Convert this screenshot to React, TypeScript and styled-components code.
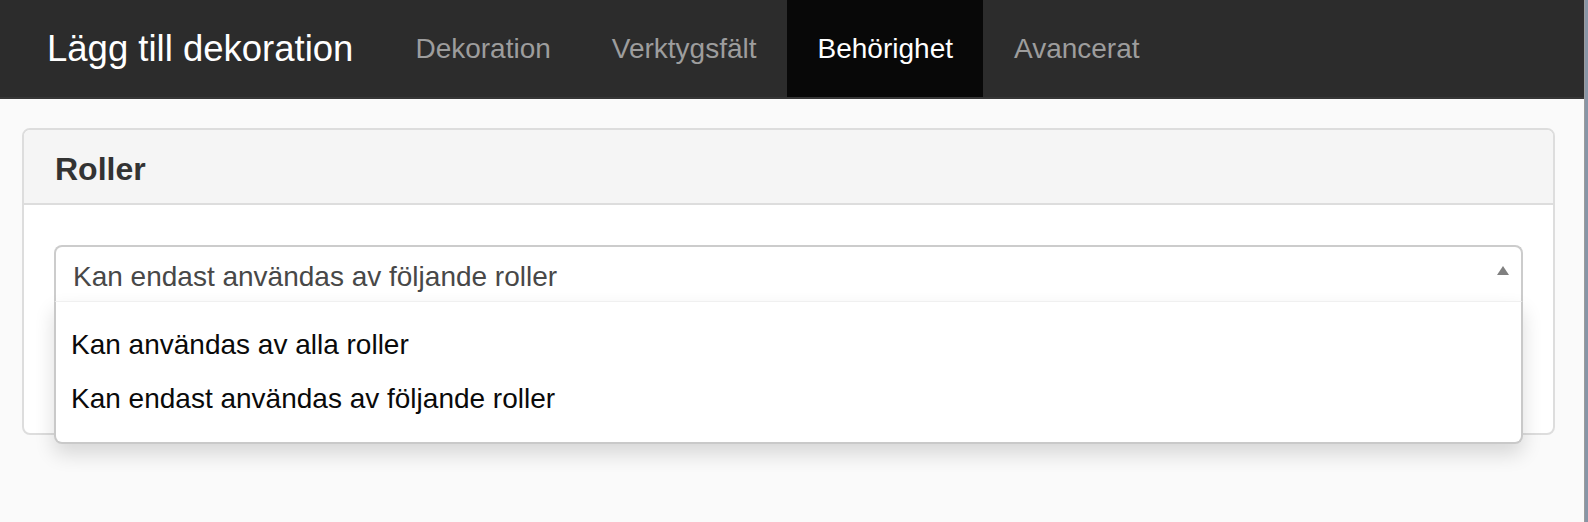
import React from "react";
import styled, { createGlobalStyle } from "styled-components";

const GlobalStyle = createGlobalStyle`
  html, body {
    margin: 0;
    padding: 0;
    background: #fafafa;
  }
  body {
    font-family: "Liberation Sans", Arial, Helvetica, sans-serif;
  }
  * {
    box-sizing: border-box;
  }
`;

const Frame = styled.div`
  display: flex;
  width: 100%;
  min-height: 522px;
`;

const Page = styled.div`
  flex: 1;
  min-width: 0;
  background: #fafafa;
`;

const WindowEdge = styled.div`
  width: 4px;
  border-left: 1px solid #9c9c9c;
  background: #8795a6;
`;
// ===================================
const Navbar = styled.nav`
  display: flex;
  align-items: stretch;
  height: 99px;
  background: #2c2c2c;
  border-bottom: 2px solid #363636;
`;

const Brand = styled.div`
  display: flex;
  align-items: center;
  padding: 0 31.5px 0 47px;
  font-size: 36.5px;
  color: #ffffff;
  white-space: nowrap;
`;

const Tabs = styled.ul`
  display: flex;
  margin: 0;
  padding: 0;
  list-style: none;
`;

const Tab = styled.li<{ $active?: boolean }>`
  display: flex;
  align-items: center;
  padding: 0 30.5px;
  font-size: 28px;
  color: ${(p) => (p.$active ? "#ffffff" : "#9d9d9d")};
  background: ${(p) => (p.$active ? "#080808" : "transparent")};
  white-space: nowrap;
  cursor: pointer;
`;
// ===================================
const Content = styled.main`
  padding: 29px 29px 0 22px;
`;

const Panel = styled.section`
  background: #ffffff;
  border: 2px solid #dddddd;
  border-radius: 8px;
`;

const PanelHeading = styled.header`
  display: flex;
  align-items: center;
  height: 75px;
  padding: 6px 31px 0;
  background: #f5f5f5;
  border-bottom: 2px solid #dddddd;
  border-radius: 6px 6px 0 0;
`;

const PanelTitle = styled.h3`
  margin: 0;
  font-size: 32px;
  font-weight: bold;
  color: #333333;
`;

const PanelBody = styled.div`
  height: 228px;
  padding: 40px 30px 30px;
`;
// ===================================
const Select = styled.div`
  position: relative;
`;

const Control = styled.div`
  position: relative;
  display: flex;
  align-items: center;
  height: 56px;
  padding: 5px 17px 0;
  border: 2px solid #cccccc;
  border-bottom: none;
  border-radius: 8px 8px 0 0;
  font-size: 28px;
  color: #484848;
  background: #ffffff;
`;

const Arrow = styled.span`
  position: absolute;
  top: 19px;
  right: 12px;
  width: 0;
  height: 0;
  border-left: 6px solid transparent;
  border-right: 6px solid transparent;
  border-bottom: 9px solid #808080;
`;

const Dropdown = styled.ul`
  position: absolute;
  top: 100%;
  left: 0;
  right: 0;
  z-index: 2;
  margin: 0;
  padding: 16px 0;
  list-style: none;
  background: #ffffff;
  border: 2px solid #c9c9c9;
  border-top: 1px solid #f0f0f0;
  border-radius: 0 0 8px 8px;
  box-shadow: 0 10px 20px rgba(0, 0, 0, 0.14);
`;

const Option = styled.li`
  padding: 6.8px 15px;
  line-height: 40.4px;
  font-size: 28px;
  color: #0a0a0a;
  white-space: nowrap;
  cursor: pointer;
`;

const tabs = ["Dekoration", "Verktygsfält", "Behörighet", "Avancerat"];

const options = [
  "Kan användas av alla roller",
  "Kan endast användas av följande roller",
];

export default function App() {
  return (
    <>
      <GlobalStyle />
      <Frame>
        <Page>
          <Navbar>
            <Brand>Lägg till dekoration</Brand>
            <Tabs>
              {tabs.map((t) => (
                <Tab key={t} $active={t === "Behörighet"}>
                  {t}
                </Tab>
              ))}
            </Tabs>
          </Navbar>

          <Content>
            <Panel>
              <PanelHeading>
                <PanelTitle>Roller</PanelTitle>
              </PanelHeading>
              <PanelBody>
                <Select>
                  <Control>
                    Kan endast användas av följande roller
                    <Arrow />
                  </Control>
                  <Dropdown>
                    {options.map((o) => (
                      <Option key={o}>{o}</Option>
                    ))}
                  </Dropdown>
                </Select>
              </PanelBody>
            </Panel>
          </Content>
        </Page>
        <WindowEdge />
      </Frame>
    </>
  );
}
